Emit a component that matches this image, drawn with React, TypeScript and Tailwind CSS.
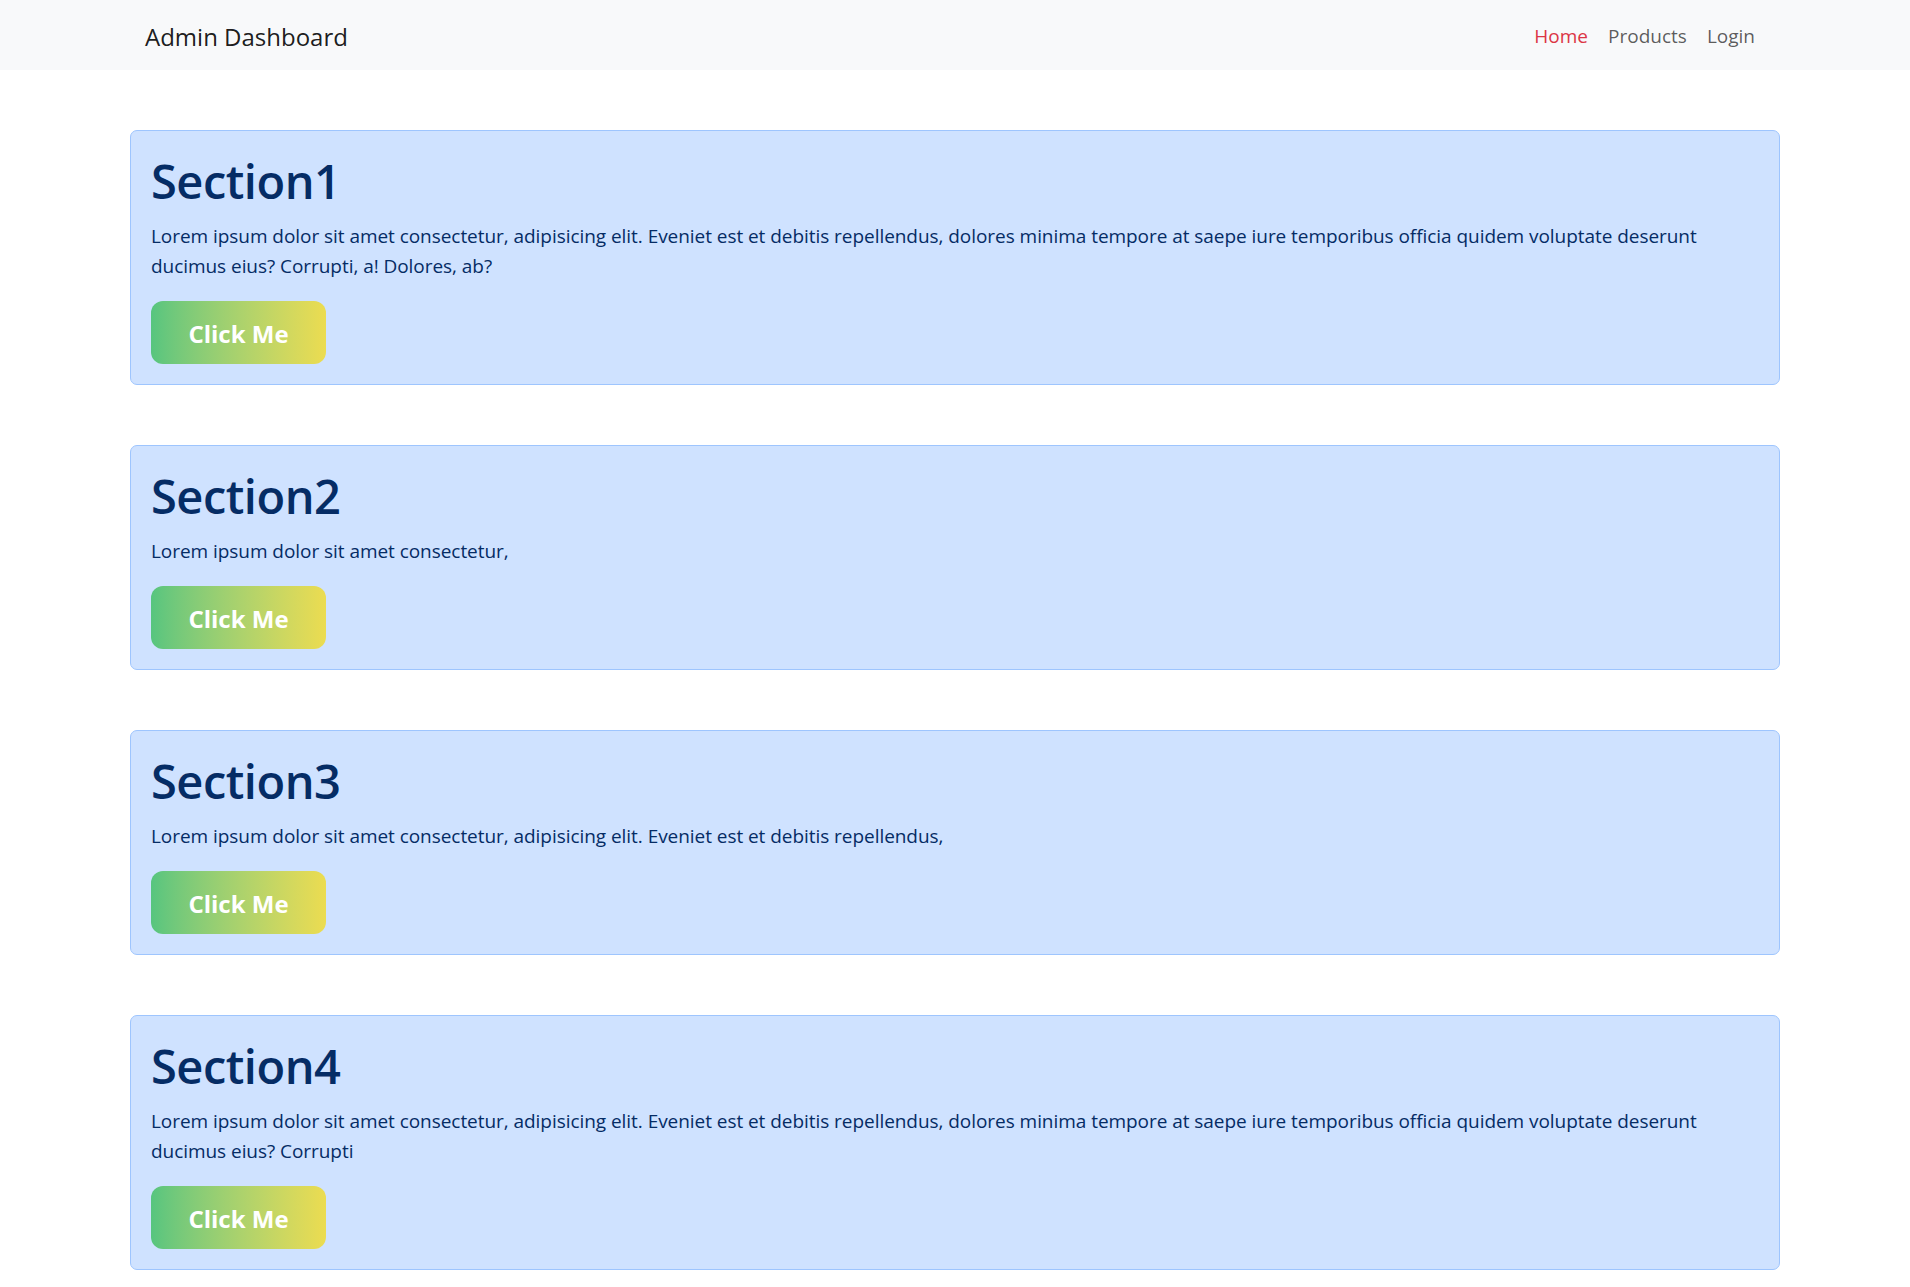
const sections = [
  {
    title: "Section1",
    text: "Lorem ipsum dolor sit amet consectetur, adipisicing elit. Eveniet est et debitis repellendus, dolores minima tempore at saepe iure temporibus officia quidem voluptate deserunt ducimus eius? Corrupti, a! Dolores, ab?",
  },
  {
    title: "Section2",
    text: "Lorem ipsum dolor sit amet consectetur,",
  },
  {
    title: "Section3",
    text: "Lorem ipsum dolor sit amet consectetur, adipisicing elit. Eveniet est et debitis repellendus,",
  },
  {
    title: "Section4",
    text: "Lorem ipsum dolor sit amet consectetur, adipisicing elit. Eveniet est et debitis repellendus, dolores minima tempore at saepe iure temporibus officia quidem voluptate deserunt ducimus eius? Corrupti",
  },
];

export default function App() {
  return (
    <div className="min-h-screen bg-white font-['Open_Sans',sans-serif]">
      <nav className="bg-[#f8f9fa] h-[70px]">
        <div className="w-[1650px] mx-auto h-full px-[15px] pt-[3px] flex items-center justify-between">
          <a href="#" className="text-[24px] text-black/90">
            Admin Dashboard
          </a>
          <ul className="flex items-center text-[19px]">
            <li>
              <a href="#" className="px-[10px] text-[#dc3545]">
                Home
              </a>
            </li>
            <li>
              <a href="#" className="px-[10px] text-black/65">
                Products
              </a>
            </li>
            <li>
              <a href="#" className="px-[10px] text-black/65">
                Login
              </a>
            </li>
          </ul>
        </div>
      </nav>

      <main className="w-[1650px] mx-auto pt-[60px] pb-[60px] flex flex-col gap-[60px]">
        {sections.map((s) => (
          <section
            key={s.title}
            className="border border-[#9ec5fe] bg-[#cfe2ff] rounded-[7px] p-[20px] text-[#052c65]"
          >
            <h1 className="text-[47px] font-semibold tracking-[-0.5px] leading-[60px] mb-[10px]">
              {s.title}
            </h1>
            <p className="text-[19px] tracking-[-0.05px] leading-[30px] mb-[20px]">
              {s.text}
            </p>
            <button className="h-[63px] w-[175px] rounded-[12px] bg-linear-to-r from-[#56c57f] to-[#ecdc50] text-white font-bold text-[24px] pt-[2px]">
              Click Me
            </button>
          </section>
        ))}
      </main>
    </div>
  );
}
